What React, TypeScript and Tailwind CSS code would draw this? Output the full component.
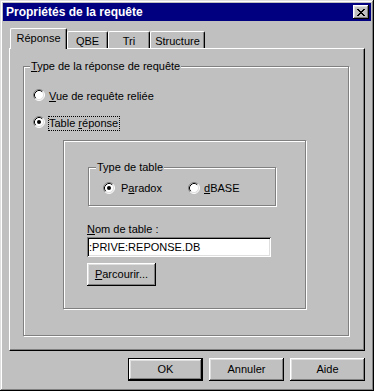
import React from "react";

function Radio({ checked }: { checked?: boolean }) {
  return (
    <svg width="12" height="12" viewBox="0 0 12 12" className="shrink-0 block">
      <circle cx="6" cy="6" r="5" fill="#fff" />
      <path d="M2.11 9.89 A5.5 5.5 0 0 1 9.89 2.11" fill="none" stroke="#808080" strokeWidth="1" />
      <path d="M9.89 2.11 A5.5 5.5 0 0 1 2.11 9.89" fill="none" stroke="#ffffff" strokeWidth="1" />
      <path d="M2.82 9.18 A4.5 4.5 0 0 1 9.18 2.82" fill="none" stroke="#000" strokeWidth="1" />
      <path d="M9.18 2.82 A4.5 4.5 0 0 1 2.82 9.18" fill="none" stroke="#dfdfdf" strokeWidth="1" />
      {checked && <circle cx="6" cy="6" r="2" fill="#000" />}
    </svg>
  );
}

function CloseIcon() {
  return (
    <svg width="8" height="7" viewBox="0 0 8 7" className="block">
      <path
        d="M0 0h2v1h-2z M6 0h2v1h-2z M1 1h2v1h-2z M5 1h2v1h-2z M2 2h4v1h-4z M3 3h2v1h-2z M2 4h4v1h-4z M1 5h2v1h-2z M5 5h2v1h-2z M0 6h2v1h-2z M6 6h2v1h-2z"
        fill="#000"
      />
    </svg>
  );
}

function Button({ children, def, className = "" }: { children: React.ReactNode; def?: boolean; className?: string }) {
  if (def) {
    return (
      <div className={`border border-black bg-[#c0c0c0] flex items-center justify-center shadow-[inset_-1px_-1px_0_#000,inset_1px_1px_0_#fff,inset_-2px_-2px_0_#808080,inset_2px_2px_0_#dfdfdf] ${className}`}>
        {children}
      </div>
    );
  }
  return (
    <div className={`bg-[#c0c0c0] flex items-center justify-center shadow-[inset_-1px_-1px_0_#000,inset_1px_1px_0_#fff,inset_-2px_-2px_0_#808080,inset_2px_2px_0_#dfdfdf] ${className}`}>
      {children}
    </div>
  );
}

export default function App() {
  return (
    <div className="w-[374px] h-[391px] bg-[#c0c0c0] p-[3px] text-[11px] leading-[13px] text-black font-['Liberation_Sans',Arial,sans-serif] shadow-[inset_-1px_-1px_0_#000,inset_1px_1px_0_#dfdfdf,inset_-2px_-2px_0_#808080,inset_2px_2px_0_#fff]">
      {/* Title bar */}
      <div className="h-[18px] bg-[#000080] flex items-center justify-between pl-[3px] pr-[2px]">
        <span className="text-white font-bold text-[12px] leading-[14px]">Propriétés de la requête</span>
        <div className="w-[16px] h-[14px] bg-[#c0c0c0] flex items-center justify-center shadow-[inset_-1px_-1px_0_#000,inset_1px_1px_0_#fff,inset_-2px_-2px_0_#808080,inset_2px_2px_0_#dfdfdf]">
          <CloseIcon />
        </div>
      </div>

      {/* Tabs */}
      <div className="ml-[6px] mt-[7px] w-[356px]">
        <div className="relative z-10 flex items-end h-[20px] pl-[1px]">
          <div className="w-[57px] h-[21px] -mb-[1px] bg-[#c0c0c0] border-l border-t border-white border-r border-r-black rounded-tl-[2px] rounded-tr-[2px] shadow-[inset_-1px_0_0_#808080] flex justify-center pt-[3px]">
            Réponse
          </div>
          <div className="w-[41px] h-[17px] border-l border-t border-white border-r border-r-black rounded-tl-[2px] rounded-tr-[2px] shadow-[inset_-1px_0_0_#808080] flex justify-center pt-[3px]">
            QBE
          </div>
          <div className="w-[42px] h-[17px] border-l border-t border-white border-r border-r-black rounded-tl-[2px] rounded-tr-[2px] shadow-[inset_-1px_0_0_#808080] flex justify-center pt-[3px]">
            Tri
          </div>
          <div className="w-[55px] h-[17px] border-l border-t border-white border-r border-r-black rounded-tl-[2px] rounded-tr-[2px] shadow-[inset_-1px_0_0_#808080] flex justify-center pt-[3px]">
            Structure
          </div>
        </div>

        {/* Panel */}
        <div className="w-[356px] h-[303px] border border-t-white border-l-white border-r-black border-b-black shadow-[inset_-1px_-1px_0_#808080] pl-[13px] pt-[17px]">
          {/* Group: Type de la réponse */}
          <div className="relative w-[326px] h-[270px] border border-[#808080] shadow-[1px_1px_0_#fff,inset_1px_1px_0_#fff]">
            <div className="absolute left-[6px] -top-[7px] px-[1px] bg-[#c0c0c0]">
              <u>T</u>ype de la réponse de requête
            </div>

            <div className="flex items-start ml-[9px] mt-[22px]">
              <Radio />
              <div className="ml-[3px] border border-transparent pr-[1px]">
                <u>V</u>ue de requête reliée
              </div>
            </div>

            <div className="flex items-start ml-[9px] mt-[12px]">
              <Radio checked />
              <div className="ml-[3px] border border-dotted border-black pr-[1px]">
                Table <u>r</u>éponse
              </div>
            </div>

            {/* Inner frame */}
            <div className="ml-[39px] mt-[9px] w-[243px] h-[169px] border border-[#808080] shadow-[1px_1px_0_#fff,inset_1px_1px_0_#fff] pt-[26px]">
              {/* Type de table group */}
              <div className="relative ml-[24px] w-[188px] h-[39px] border border-[#808080] shadow-[1px_1px_0_#fff,inset_1px_1px_0_#fff] flex items-start pt-[14px]">
                <div className="absolute left-[7px] -top-[7px] px-[1px] bg-[#c0c0c0]">Type de table</div>
                <div className="w-[99px] flex items-start pl-[14px]">
                  <Radio checked />
                  <div className="ml-[6px]">
                    P<u>a</u>radox
                  </div>
                </div>
                <div className="flex items-start">
                  <Radio />
                  <div className="ml-[4px]">
                    <u>d</u>BASE
                  </div>
                </div>
              </div>

              <div className="ml-[23px] mt-[17px]">
                <u>N</u>om de table :
              </div>
              <div className="ml-[23px] mt-[1px] w-[184px] h-[20px] bg-white flex items-center pl-[2px] shadow-[inset_1px_1px_0_#808080,inset_-1px_-1px_0_#fff,inset_2px_2px_0_#000,inset_-2px_-2px_0_#dfdfdf]">
                :PRIVE:REPONSE.DB
              </div>
              <Button className="ml-[23px] mt-[6px] w-[69px] h-[23px]">
                <span>
                  <u>P</u>arcourir...
                </span>
              </Button>
            </div>
          </div>
        </div>

        {/* Buttons */}
        <div className="mt-[7px] flex justify-end gap-[6px]">
          <Button def className="w-[75px] h-[23px]">OK</Button>
          <Button className="w-[75px] h-[23px]">Annuler</Button>
          <Button className="w-[75px] h-[23px]">Aide</Button>
        </div>
      </div>
    </div>
  );
}
